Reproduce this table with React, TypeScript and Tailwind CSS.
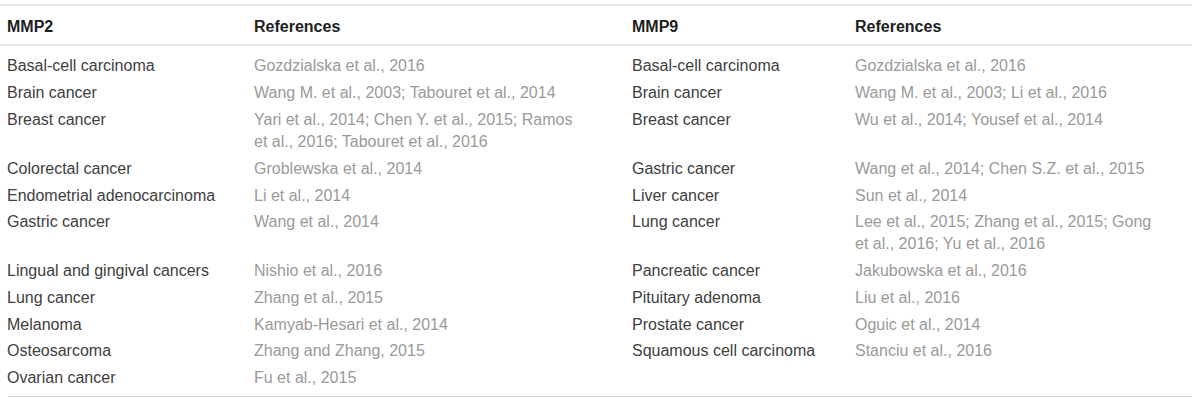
const rows: [string, React.ReactNode, string, React.ReactNode][] = [
  ['Basal-cell carcinoma', 'Gozdzialska et al., 2016', 'Basal-cell carcinoma', 'Gozdzialska et al., 2016'],
  ['Brain cancer', 'Wang M. et al., 2003; Tabouret et al., 2014', 'Brain cancer', 'Wang M. et al., 2003; Li et al., 2016'],
  [
    'Breast cancer',
    <>Yari et al., 2014; Chen Y. et al., 2015; Ramos<br />et al., 2016; Tabouret et al., 2016</>,
    'Breast cancer',
    'Wu et al., 2014; Yousef et al., 2014',
  ],
  ['Colorectal cancer', 'Groblewska et al., 2014', 'Gastric cancer', 'Wang et al., 2014; Chen S.Z. et al., 2015'],
  ['Endometrial adenocarcinoma', 'Li et al., 2014', 'Liver cancer', 'Sun et al., 2014'],
  [
    'Gastric cancer',
    'Wang et al., 2014',
    'Lung cancer',
    <>Lee et al., 2015; Zhang et al., 2015; Gong<br />et al., 2016; Yu et al., 2016</>,
  ],
  ['Lingual and gingival cancers', 'Nishio et al., 2016', 'Pancreatic cancer', 'Jakubowska et al., 2016'],
  ['Lung cancer', 'Zhang et al., 2015', 'Pituitary adenoma', 'Liu et al., 2016'],
  ['Melanoma', 'Kamyab-Hesari et al., 2014', 'Prostate cancer', 'Oguic et al., 2014'],
  ['Osteosarcoma', 'Zhang and Zhang, 2015', 'Squamous cell carcinoma', 'Stanciu et al., 2016'],
  ['Ovarian cancer', 'Fu et al., 2015', '', ''],
]

const cols = 'grid grid-cols-[247px_378px_223px_1fr]'

export default function App() {
  return (
    <div className="w-[1200px] h-[404px] bg-white pt-[4px] font-['Liberation_Sans',Arial,sans-serif] text-[16px]">
      <div className="w-[1192px]">
        <div className="h-[2px] bg-[#e4e4e4]" />
        <div className={`${cols} h-[38px] pt-[3px] items-center font-bold text-[#1e1e1e]`}>
          <div className="pl-[7px]">MMP2</div>
          <div className="pl-[7px]">References</div>
          <div className="pl-[7px]">MMP9</div>
          <div className="pl-[7px]">References</div>
        </div>
        <div className="h-[2px] bg-[#e4e4e4]" />
        <div className="pt-[7px] pb-[4px] leading-[22px]">
          {rows.map((r, i) => (
            <div key={i} className={`${cols} py-[2.4px]`}>
              <div className="pl-[7px] text-[#404040]">{r[0]}</div>
              <div className="pl-[7px] text-[#9a9a9a] whitespace-nowrap">{r[1]}</div>
              <div className="pl-[7px] text-[#404040]">{r[2]}</div>
              <div className="pl-[7px] text-[#9a9a9a] whitespace-nowrap">{r[3]}</div>
            </div>
          ))}
        </div>
        <div className="ml-[8px] h-px bg-[#cfcfcf]" />
      </div>
    </div>
  )
}
